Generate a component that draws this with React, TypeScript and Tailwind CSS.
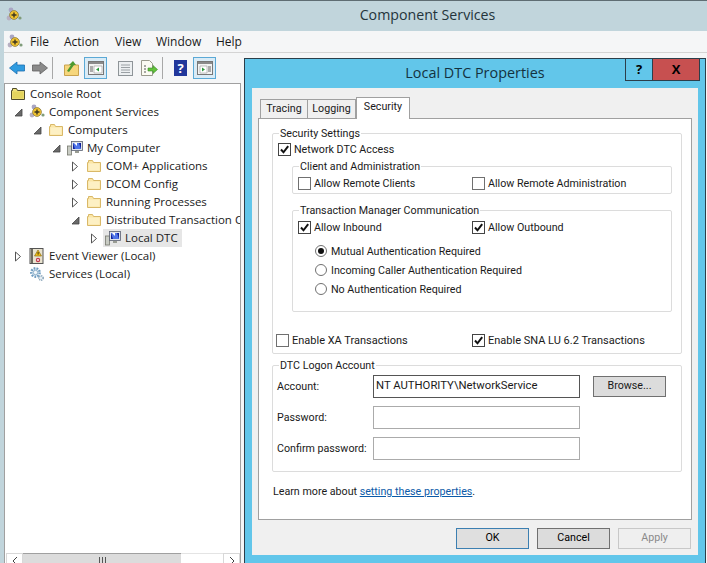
import React from 'react';

const ui = "font-['Open_Sans','Noto_Sans',sans-serif]";
const dlg = "font-['Roboto','Open_Sans',sans-serif]";

function SnapIcon({ className = '' }: { className?: string }) {
  return (
    <svg viewBox="0 0 16 16" className={`h-4 w-4 shrink-0 ${className}`}>
      <circle cx="5" cy="3" r="2.4" fill="#a9a6c4" />
      <circle cx="3" cy="11" r="2.4" fill="#b7b0c2" />
      <circle cx="14" cy="11" r="1.6" fill="#7f9c7a" />
      <circle cx="8" cy="8" r="4.4" fill="#f1c431" stroke="#8d7a3a" strokeWidth="0.8" />
      <path d="M5.5 8h5M8 5.5v5" stroke="#3c3520" strokeWidth="1.4" />
    </svg>
  );
}

function FolderIcon({ root = false }: { root?: boolean }) {
  return (
    <svg viewBox="0 0 16 14" className="h-[14px] w-4 shrink-0">
      <path
        d="M1.5 12.5V3.5h1V1.5h4l1 2h7v9z"
        fill={root ? '#efe27a' : '#fbe6a6'}
        stroke={root ? '#4f4a2c' : '#d9b868'}
        strokeWidth="1"
      />
      <path d="M2.5 4.5h11v7h-11z" fill={root ? '#e4d45e' : '#fdf0c4'} />
    </svg>
  );
}

function ComputerIcon() {
  return (
    <svg viewBox="0 0 16 16" className="h-4 w-4 shrink-0">
      <rect x="0.5" y="6" width="4" height="9" fill="#c9ccc4" stroke="#77796f" strokeWidth="0.8" />
      <rect x="4.5" y="1.5" width="11" height="9" fill="#dfe3ea" stroke="#5a6070" strokeWidth="0.8" />
      <path d="M6 3h8v6H6z" fill="#10209a" />
      <path d="M6 3l6 0 2 6H8z" fill="#4f74e8" />
      <path d="M7 3h3v3z" fill="#fff" />
      <path d="M8 11h4v2H8z" fill="#9a9d94" />
    </svg>
  );
}

function BookIcon() {
  return (
    <svg viewBox="0 0 16 16" className="h-4 w-4 shrink-0">
      <rect x="1" y="0.5" width="13" height="15" fill="#e9e3cf" stroke="#555" strokeWidth="1" />
      <path d="M2 1h2v14H2z" fill="#6d6a5f" />
      <path d="M9 2l3.5 6h-7z" fill="#f3c316" stroke="#7a5c10" strokeWidth="0.6" />
      <rect x="8.6" y="4" width="1" height="2.6" fill="#3a2b05" />
      <circle cx="9" cy="12" r="2.2" fill="#c23a4e" />
      <circle cx="9" cy="12" r="0.9" fill="#fff" />
    </svg>
  );
}

function GearIcon() {
  return (
    <svg viewBox="0 0 16 16" className="h-4 w-4 shrink-0">
      <circle cx="6.5" cy="6.5" r="4.2" fill="#dbe8f2" stroke="#6f9cc0" strokeWidth="2.4" strokeDasharray="1.7 1.2" />
      <circle cx="6.5" cy="6.5" r="2.2" fill="#f4f8fb" stroke="#7ea4c2" strokeWidth="0.8" />
      <circle cx="12" cy="12" r="2.2" fill="#e6eef4" stroke="#7f9db3" strokeWidth="1.4" strokeDasharray="1.1 0.8" />
    </svg>
  );
}

function Expander({ state }: { state?: 'open' | 'closed' }) {
  return (
    <span className="flex w-4 shrink-0 items-center pl-[1px]">
      {state === 'closed' && (
        <svg viewBox="0 0 8 11" className="h-[11px] w-2">
          <path d="M1.5 1v9l5-4.5z" fill="#fff" stroke="#555" strokeWidth="1" />
        </svg>
      )}
      {state === 'open' && (
        <svg viewBox="0 0 9 9" className="h-[9px] w-[9px]">
          <path d="M8 1v7H1z" fill="#6a6a6a" stroke="#444" strokeWidth="0.8" />
        </svg>
      )}
    </span>
  );
}

const indents = ['pl-[5px]', 'pl-[8px]', 'pl-[27px]', 'pl-[46px]', 'pl-[65px]', 'pl-[84px]'];

const treeRows: {
  level: number;
  text: string;
  icon: React.ReactNode;
  state?: 'open' | 'closed';
  selected?: boolean;
}[] = [
  { level: 0, text: 'Console Root', icon: <FolderIcon root /> },
  { level: 1, text: 'Component Services', icon: <SnapIcon />, state: 'open' },
  { level: 2, text: 'Computers', icon: <FolderIcon />, state: 'open' },
  { level: 3, text: 'My Computer', icon: <ComputerIcon />, state: 'open' },
  { level: 4, text: 'COM+ Applications', icon: <FolderIcon />, state: 'closed' },
  { level: 4, text: 'DCOM Config', icon: <FolderIcon />, state: 'closed' },
  { level: 4, text: 'Running Processes', icon: <FolderIcon />, state: 'closed' },
  { level: 4, text: 'Distributed Transaction C', icon: <FolderIcon />, state: 'open' },
  { level: 5, text: 'Local DTC', icon: <ComputerIcon />, state: 'closed', selected: true },
  { level: 1, text: 'Event Viewer (Local)', icon: <BookIcon />, state: 'closed' },
  { level: 1, text: 'Services (Local)', icon: <GearIcon /> },
];

function TreeRow({ row }: { row: (typeof treeRows)[number] }) {
  return (
    <div className={`flex h-[18px] items-center whitespace-nowrap ${indents[row.level]}`}>
      {row.level > 0 && <Expander state={row.state} />}
      <span className={`flex h-[18px] items-center gap-[4px] pr-[4px] ${row.selected ? 'bg-[#e6e6e6] -ml-[2px] pl-[2px]' : ''}`}>
        {row.icon}
        <span>{row.text}</span>
      </span>
    </div>
  );
}

function ToolBox({ children }: { children: React.ReactNode }) {
  return (
    <span className="flex h-[22px] w-[23px] items-center justify-center border border-[#5ba9d6] bg-[#d9ebf6]">
      {children}
    </span>
  );
}

function PaneIcon({ right = false }: { right?: boolean }) {
  return (
    <svg viewBox="0 0 16 14" className="h-[14px] w-4">
      <rect x="0.5" y="0.5" width="15" height="13" fill="#f3f3f3" stroke="#777" />
      <path d="M1 1h14v2H1z" fill="#8a8a8a" />
      <path d={right ? 'M3 5h7v7H3z' : 'M6 5h8v7H6z'} fill="#fff" stroke="#999" strokeWidth="0.6" />
      <path d={right ? 'M5 6.5l3 2-3 2z' : 'M11 6.5l-3 2 3 2z'} fill="#2a9a3c" />
      <path d={right ? 'M11 6h3M11 8h3M11 10h3' : 'M2 6h3M2 8h3M2 10h3'} stroke="#666" strokeWidth="1" />
    </svg>
  );
}

function Toolbar() {
  return (
    <div className="flex h-[30px] shrink-0 items-center pl-[5px]">
      <svg viewBox="0 0 16 14" className="h-[14px] w-4">
        <path d="M0.5 7L8 1v3h7.5v6H8v3z" fill="#2f9be0" stroke="#1c6fb0" strokeWidth="0.8" />
      </svg>
      <svg viewBox="0 0 16 14" className="ml-[7px] h-[14px] w-4">
        <path d="M15.5 7L8 1v3H0.5v6H8v3z" fill="#8a8a8a" stroke="#5f5f5f" strokeWidth="0.8" />
      </svg>
      <span className="ml-[4px] h-[22px] w-px bg-[#a8a8a8]" />
      <svg viewBox="0 0 15 16" className="ml-[11px] h-4 w-[15px]">
        <path d="M0.5 5h14v10.5H0.5z" fill="#f6d67c" stroke="#c9a24e" />
        <path d="M3 11L7 5H5l4-4 3 4h-2l-5 7z" fill="#4d9a2e" />
      </svg>
      <span className="ml-[5px]">
        <ToolBox>
          <PaneIcon />
        </ToolBox>
      </span>
      <svg viewBox="0 0 15 15" className="ml-[11px] h-[15px] w-[15px]">
        <rect x="0.5" y="0.5" width="14" height="14" fill="#eceff1" stroke="#8e9498" />
        <path d="M3 4h9M3 6.5h9M3 9h9M3 11.5h9" stroke="#9aa0a4" />
      </svg>
      <svg viewBox="0 0 17 16" className="ml-[8px] h-4 w-[17px]">
        <path d="M0.5 0.5h8l3 3v12h-11z" fill="#fbfbf2" stroke="#9a9a8c" />
        <path d="M3 6h2M3 9h2M3 12h2" stroke="#555" />
        <path d="M7 8h5V5.5L16.5 9.5 12 13.5V11H7z" fill="#63c23c" stroke="#3a8a25" strokeWidth="0.6" />
      </svg>
      <span className="ml-[4px] h-[22px] w-px bg-[#a8a8a8]" />
      <span className={`ml-[11px] flex h-[16px] w-[13px] items-center justify-center bg-[#21379b] text-[13px] leading-none font-bold text-white ${ui}`}>
        ?
      </span>
      <span className="ml-[6px]">
        <ToolBox>
          <PaneIcon right />
        </ToolBox>
      </span>
    </div>
  );
}

function Check({ on = false, label, className = '' }: { on?: boolean; label: string; className?: string }) {
  return (
    <div className={`flex h-4 items-center gap-[3px] whitespace-nowrap ${className}`}>
      <span className={`flex h-[13px] w-[13px] shrink-0 items-center justify-center border bg-white ${on ? 'border-[#444]' : 'border-[#707070]'}`}>
        {on && (
          <svg viewBox="0 0 11 11" className="h-[11px] w-[11px]">
            <path d="M2 5.5l2.5 2.8L9.2 2.2" fill="none" stroke="#111" strokeWidth="2" />
          </svg>
        )}
      </span>
      <span className="pt-[3px]">{label}</span>
    </div>
  );
}

function Radio({ on = false, label, className = '' }: { on?: boolean; label: string; className?: string }) {
  return (
    <div className={`flex h-4 items-center gap-[4px] whitespace-nowrap ${className}`}>
      <span className="flex h-[12px] w-[12px] items-center justify-center rounded-full border border-[#707070] bg-white">
        {on && <span className="h-[6px] w-[6px] rounded-full bg-[#111]" />}
      </span>
      <span className="pt-[3px]">{label}</span>
    </div>
  );
}

function Group({ title, className = '', children }: { title: string; className?: string; children: React.ReactNode }) {
  return (
    <div className={`rounded-[2px] border border-[#dcdcdc] ${className}`}>
      <div className="-mt-[8px] ml-[6px] h-[14px] w-fit whitespace-nowrap bg-white px-[1px] pt-px leading-[14px]">{title}</div>
      {children}
    </div>
  );
}

function Field({ label, value, focused = false, className = '' }: { label: string; value?: string; focused?: boolean; className?: string }) {
  return (
    <div className={`flex items-center pl-[4px] ${className}`}>
      <span className="w-[96px] shrink-0 whitespace-nowrap pt-px">{label}</span>
      <div className={`h-[23px] w-[207px] border px-[2px] leading-[20px] ${focused ? 'border-[#555] text-[11.3px]' : 'border-[#ababab]'}`}>{value}</div>
    </div>
  );
}

function DlgButton({ text, variant }: { text: string; variant?: 'default' | 'disabled' }) {
  const look =
    variant === 'default'
      ? 'border-[#3c7fb1] bg-[#dfdfdf] text-black'
      : variant === 'disabled'
        ? 'border-[#c8c8c8] bg-[#efefef] text-[#8a8a8a]'
        : 'border-[#707070] bg-[#dcdcdc] text-black';
  return <div className={`flex h-[21px] w-[73px] items-center justify-center border ${look}`}>{text}</div>;
}

function Dialog() {
  return (
    <div className={`absolute top-[57px] left-[244px] h-[520px] w-[462px] border border-[#2c3e4a] bg-[#62c6ea] text-[10.7px] text-[#1a1a1a] ${dlg}`}>
      <div className={`relative flex h-[29px] items-center justify-center pb-[2px] text-[14.4px] text-[#14323f] ${ui}`}>
        Local DTC Properties
        <div className="absolute top-0 right-[5px] flex h-[22px]">
          <span className="flex w-[28px] items-center justify-center border-x border-b border-[#2c3e4a] text-[13px] font-bold text-black">?</span>
          <span className="flex w-[47px] items-center justify-center border-r border-b border-[#2c3e4a] bg-[#c75050] text-[13px] font-bold text-black">X</span>
        </div>
      </div>
      <div className="mx-[7px] h-[467px] bg-[#f0f0f0] px-[6px] pt-[9px]">
        <div className="flex h-[21px] items-end pl-[2px]">
          <span className="flex h-[19px] w-[48px] items-center justify-center border border-b-0 border-[#a0a0a0] bg-[#f0f0f0]">Tracing</span>
          <span className="flex h-[19px] w-[48px] items-center justify-center border-y border-r border-b-0 border-[#a0a0a0] bg-[#f0f0f0]">Logging</span>
          <span className="relative z-10 -mb-px flex h-[22px] w-[54px] items-center justify-center border border-b-0 border-[#a0a0a0] bg-white pb-[3px]">Security</span>
        </div>
        <div className="h-[402px] border border-[#a0a0a0] bg-white pt-[14px] pr-[9px] pl-[13px]">
          <Group title="Security Settings" className="pb-[5px]">
            <Check on label="Network DTC Access" className="mt-px ml-[5px]" />
            <Group title="Client and Administration" className="mt-[9px] mr-[9px] ml-[19px] pb-[2px]">
              <div className="mt-[2px] flex pl-[5px]">
                <Check label="Allow Remote Clients" className="w-[174px]" />
                <Check label="Allow Remote Administration" />
              </div>
            </Group>
            <Group title="Transaction Manager Communication" className="mt-[16px] mr-[9px] ml-[19px] pb-[14px]">
              <div className="mt-[2px] flex pl-[5px]">
                <Check on label="Allow Inbound" className="w-[174px]" />
                <Check on label="Allow Outbound" />
              </div>
              <Radio on label="Mutual Authentication Required" className="mt-[8px] ml-[22px]" />
              <Radio label="Incoming Caller Authentication Required" className="mt-[3px] ml-[22px]" />
              <Radio label="No Authentication Required" className="mt-[3px] ml-[22px]" />
            </Group>
            <div className="mt-[20px] flex pl-[3px] text-[11px]">
              <Check label="Enable XA Transactions" className="w-[196px]" />
              <Check on label="Enable SNA LU 6.2 Transactions" />
            </div>
          </Group>
          <Group title="DTC Logon Account" className="mt-[11px] pb-[11px]">
            <div className="mt-[3px] flex items-center">
              <Field label="Account:" value="NT AUTHORITY\NetworkService" focused />
              <div className="ml-[13px] flex h-[21px] w-[73px] items-center justify-center border border-[#707070] bg-[#dcdcdc]">Browse...</div>
            </div>
            <Field label="Password:" className="mt-[8px]" />
            <Field label="Confirm password:" className="mt-[8px]" />
          </Group>
          <div className="mt-[12px] ml-px leading-[16px]">
            Learn more about <span className="text-[#0b5aa8] underline">setting these properties</span>.
          </div>
        </div>
        <div className="mt-[8px] flex justify-end gap-[8px] pr-px">
          <DlgButton text="OK" variant="default" />
          <DlgButton text="Cancel" />
          <DlgButton text="Apply" variant="disabled" />
        </div>
      </div>
    </div>
  );
}

export default function App() {
  return (
    <div className={`relative flex h-[563px] w-[707px] flex-col overflow-hidden border-t border-[#5f6d73] bg-[#c1d5dc] text-[12px] text-[#1a1a1a] ${ui}`}>
      <div className="relative flex h-[30px] shrink-0 items-center justify-center pb-[2px] pl-[148px] text-[14.2px] text-[#24343b]">
        <SnapIcon className="absolute top-[6px] left-[6px]" />
        Component Services
      </div>
      <div className="ml-[4px] flex min-h-0 flex-1 flex-col bg-[#f5f6f7]">
        <div className="flex h-[22px] shrink-0 items-center border-b border-[#d4d4d4] pl-[3px]">
          <SnapIcon />
          <span className="ml-[7px] w-[34px]">File</span>
          <span className="w-[51px]">Action</span>
          <span className="w-[41px]">View</span>
          <span className="w-[60px]">Window</span>
          <span>Help</span>
        </div>
        <Toolbar />
        <div className="flex min-h-0 w-[237px] flex-1 flex-col border-t border-r border-l border-[#a0a0a0] bg-white text-[11.5px]">
          <div className="flex-1 overflow-hidden pt-px">
            {treeRows.map((row) => (
              <TreeRow key={row.text} row={row} />
            ))}
          </div>
          <div className="ml-px flex h-[10px] shrink-0">
            <span className="flex w-[17px] justify-center border border-b-0 border-[#d8d8d8]">
              <svg viewBox="0 0 6 10" className="mt-[2px] h-[10px] w-[6px]">
                <path d="M5 1L1 5l4 4" fill="none" stroke="#444" />
              </svg>
            </span>
            <span className="flex w-[158px] justify-center border-t border-[#a0a0a0] bg-[#dcdcdc] pt-[3px]">
              <span className="h-[7px] w-[7px] border-x border-[#555] bg-[linear-gradient(90deg,transparent_2px,#555_2px,#555_3px,transparent_3px)]" />
            </span>
            <span className="flex-1 border-t border-[#e4e4e4]" />
            <span className="flex w-[17px] justify-center border border-b-0 border-[#d8d8d8]">
              <svg viewBox="0 0 6 10" className="mt-[2px] h-[10px] w-[6px]">
                <path d="M1 1l4 4-4 4" fill="none" stroke="#444" />
              </svg>
            </span>
          </div>
        </div>
      </div>
      <Dialog />
    </div>
  );
}
